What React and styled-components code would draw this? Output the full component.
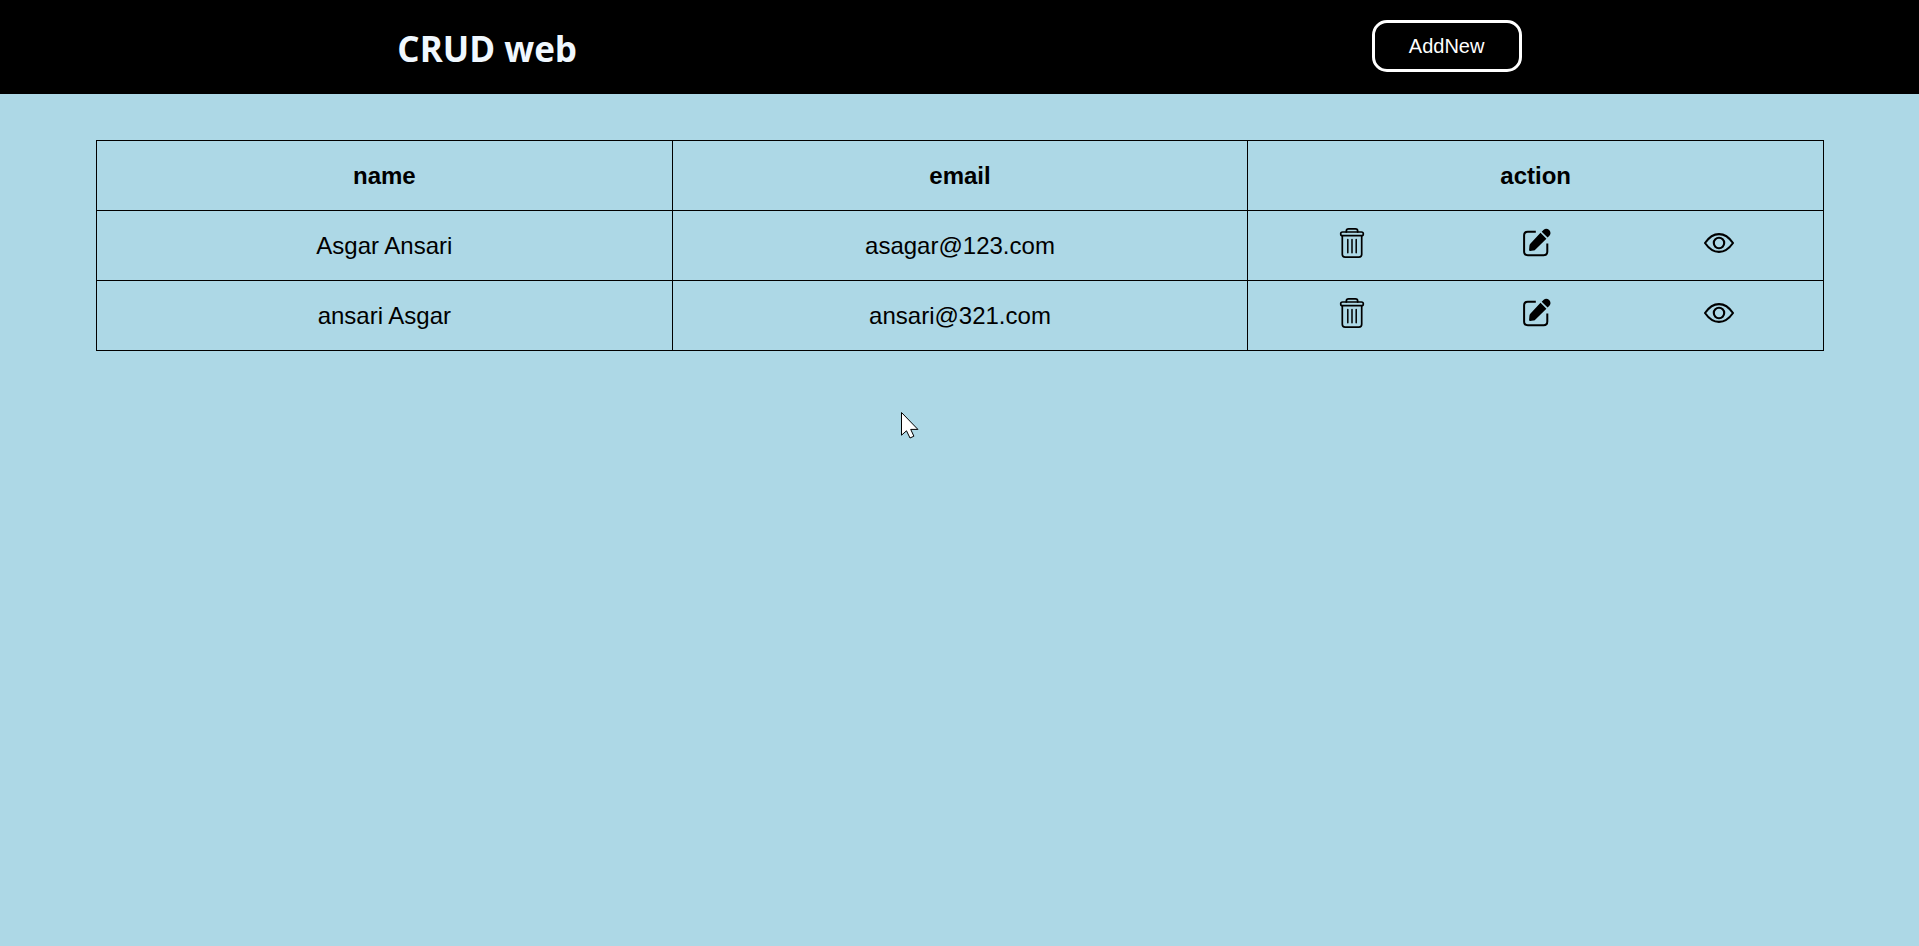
import React from "react";
import styled, { createGlobalStyle } from "styled-components";

const GlobalStyle = createGlobalStyle`
  * { box-sizing: border-box; }
  body {
    margin: 0;
    min-height: 100vh;
    background: #add8e6;
    color: #000;
    font-family: "Liberation Sans", Arial, sans-serif;
  }
`;

const Header = styled.header`
  display: flex;
  justify-content: space-around;
  align-items: flex-start;
  padding: 20px 0 16px;
  background: #000;
`;

const Title = styled.h1`
  margin: 0;
  color: aliceblue;
  font: 700 35px/58px "Open Sans", sans-serif;
`;

const AddButton = styled.button`
  width: 150px;
  height: 52px;
  padding: 0;
  border: 3px solid #fff;
  border-radius: 15px;
  background: #000;
  color: #fff;
  font: 400 20px "Liberation Sans", Arial, sans-serif;
  cursor: pointer;
`;

const Main = styled.main`
  padding: 46px 95px 0 96px;
`;

const Table = styled.table`
  width: 100%;
  border-collapse: collapse;
  table-layout: fixed;
  font-size: 24px;
  text-align: center;
`;

const Row = styled.tr`
  height: 70px;
`;

const HeadCell = styled.th`
  padding: 0;
  border: 1px solid #000;
`;

const Cell = styled.td`
  padding: 0;
  border: 1px solid #000;
`;

const Actions = styled.div`
  display: flex;
  justify-content: space-around;
  padding: 0 12px 5px;
`;

const IconButton = styled.button`
  display: flex;
  width: 30px;
  height: 30px;
  padding: 0;
  border: 0;
  background: none;
  color: #000;
  cursor: pointer;
`;

const Icon = styled.svg.attrs({
  viewBox: "0 0 30 30",
  width: 30,
  height: 30,
  fill: "none",
  stroke: "currentColor",
  strokeLinecap: "round",
  strokeLinejoin: "round",
  "aria-hidden": true,
})``;

const Pointer = styled.svg`
  position: absolute;
  left: 901px;
  top: 411px;
  pointer-events: none;
`;

const TrashIcon = () => (
  <Icon strokeWidth="1.7">
    <path d="M9.3 4V3.200Q9.300.900 11.600.900h6.800q2.300 0 2.300 2.300V4" />
    <rect x="3.7" y="4" width="22.6" height="3.700" rx="1.800" />
    <path d="M5.300 7.900V26.300q0 2.800 2.800 2.800h13.800q2.800 0 2.800-2.800V7.900" />
    <path strokeWidth="1.500" d="M10.800 11.400v13.400M15 11.400v13.400M19.200 11.400v13.400" />
  </Icon>
);

const EditIcon = () => (
  <Icon strokeWidth="2">
    <path
      strokeLinecap="butt"
      d="M14.800 3.700H6.800Q3.100 3.700 3.100 7.400V23.600Q3.100 27.300 6.800 27.300H22.600Q26.300 27.300 26.300 23.600V15.600"
    />
    <path
      fill="currentColor"
      stroke="none"
      d="M19.500 4.800 25.400 10.700 14.200 21.700Q13.300 22.500 12.200 22.600L9.300 22.900Q8 23 8.100 21.700L8.400 18.100Q8.500 16.600 9.300 15.800ZM20.700 3.700 22.700 1.800Q25.400-.300 28.200 2.100 30.600 4.900 28.600 7.500L26.600 9.500Z"
    />
  </Icon>
);

const EyeIcon = () => (
  <Icon strokeWidth="2.100">
    <path d="M1 15C5 9.200 9.800 6.100 15 6.100S25 9.200 29 15C25 20.800 20.200 23.900 15 23.900S5 20.800 1 15Z" />
    <circle cx="15" cy="15" r="5.200" />
  </Icon>
);

const users = [
  { name: "Asgar Ansari", email: "asagar@123.com" },
  { name: "ansari Asgar", email: "ansari@321.com" },
];

export default function App() {
  return (
    <>
      <GlobalStyle />
      <Header>
        <Title>CRUD web</Title>
        <AddButton type="button">AddNew</AddButton>
      </Header>
      <Main>
        <Table>
          <thead>
            <Row>
              <HeadCell scope="col">name</HeadCell>
              <HeadCell scope="col">email</HeadCell>
              <HeadCell scope="col">action</HeadCell>
            </Row>
          </thead>
          <tbody>
            {users.map((user) => (
              <Row key={user.email}>
                <Cell>{user.name}</Cell>
                <Cell>{user.email}</Cell>
                <Cell>
                  <Actions>
                    <IconButton type="button" aria-label={`Delete ${user.name}`}>
                      <TrashIcon />
                    </IconButton>
                    <IconButton type="button" aria-label={`Edit ${user.name}`}>
                      <EditIcon />
                    </IconButton>
                    <IconButton type="button" aria-label={`View ${user.name}`}>
                      <EyeIcon />
                    </IconButton>
                  </Actions>
                </Cell>
              </Row>
            ))}
          </tbody>
        </Table>
      </Main>
      <Pointer width="20" height="30" viewBox="0 0 20 30" aria-hidden="true">
        <path
          d="M.5 1.500V24.200L5.500 19.800 9 27 12.900 25.200 9.700 18.400H16.900Z"
          fill="#fff"
          stroke="#000"
          strokeWidth="1"
        />
      </Pointer>
    </>
  );
}
